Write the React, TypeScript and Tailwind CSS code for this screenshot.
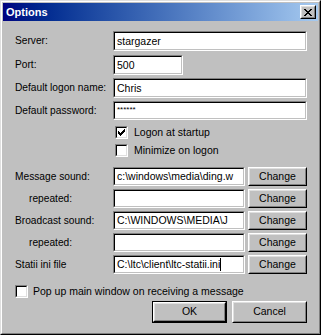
import type { ReactNode } from 'react'

const FONT = { fontFamily: '"Liberation Sans", Arial, sans-serif' }

function Field({ width, value, small, caret }: { width: string; value?: string; small?: boolean; caret?: boolean }) {
  return (
    <div className={`${width} h-full shrink-0 border border-t-[#808080] border-l-[#808080] border-b-white border-r-white`}>
      <div className="h-full border border-t-black border-l-black border-b-[#c0c0c0] border-r-[#c0c0c0] bg-white flex items-center pl-[2px] overflow-hidden whitespace-nowrap">
        <span className={small ? 'text-[8px] leading-none text-black -mt-[2px]' : 'text-[10.5px] leading-none text-black'}>
          {value}
        </span>
        {caret && <span className="inline-block w-px h-[13px] bg-black" />}
      </div>
    </div>
  )
}

function Btn({ children, width, isDefault }: { children: ReactNode; width: string; isDefault?: boolean }) {
  const inner = (
    <div className="h-full border border-t-white border-l-white border-b-black border-r-black">
      <div className="h-full border border-t-[#dfdfdf] border-l-[#dfdfdf] border-b-[#808080] border-r-[#808080] bg-[#c0c0c0] flex items-center justify-center text-[10.5px] text-black">
        {children}
      </div>
    </div>
  )
  return isDefault ? (
    <div className={`${width} h-full shrink-0 border border-black`}>{inner}</div>
  ) : (
    <div className={`${width} h-full shrink-0`}>{inner}</div>
  )
}

function Check({ checked }: { checked?: boolean }) {
  return (
    <div className="w-[13px] h-[13px] shrink-0 border border-t-[#808080] border-l-[#808080] border-b-white border-r-white">
      <div className="w-full h-full border border-t-black border-l-black border-b-[#dfdfdf] border-r-[#dfdfdf] bg-white">
        {checked && (
          <svg width="9" height="9" viewBox="0 0 9 9" className="block">
            <path d="M1 3h1v1h1v1h1V4h1V3h1V2h1V1h1v3H7v1H6v1H5v1H4v1H3V7H2V6H1z" fill="black" />
          </svg>
        )}
      </div>
    </div>
  )
}

function Row({ label, indent, children, className }: { label: string; indent?: boolean; children: ReactNode; className: string }) {
  return (
    <div className={`flex items-center ${className}`}>
      <span className={`w-[98px] shrink-0 text-[10.2px] text-black whitespace-nowrap ${indent ? 'pl-[14px]' : ''}`}>{label}</span>
      {children}
    </div>
  )
}

export default function App() {
  return (
    <div style={FONT} className="w-[321px] h-[335px] border border-t-[#dfdfdf] border-l-[#dfdfdf] border-b-black border-r-black">
      <div className="w-full h-full border border-t-white border-l-white border-b-[#808080] border-r-[#808080] bg-[#c0c0c0] p-px flex flex-col">
        {/* title bar */}
        <div className="h-[18px] shrink-0 flex items-center justify-between pl-[3px] pr-[2px] bg-gradient-to-r from-[#000080] to-[#a6caf0]">
          <span className="text-white text-[11px] font-bold">Options</span>
          <div className="w-[16px] h-[14px] border border-t-white border-l-white border-b-black border-r-black">
            <div className="w-full h-full border border-t-[#dfdfdf] border-l-[#dfdfdf] border-b-[#808080] border-r-[#808080] bg-[#c0c0c0] flex items-center justify-center">
              <svg width="8" height="7" viewBox="0 0 8 7">
                <path d="M0 0h2v1h1v1h2V1h1V0h2v1H7v1H6v1H5v1h1v1h1v1h1v1H6V6H5V5H3v1H2v1H0V6h1V5h1V4h1V3H2V2H1V1H0z" fill="black" />
              </svg>
            </div>
          </div>
        </div>

        {/* body */}
        <div className="flex flex-col pl-[12px]">
          <Row label="Server:" className="h-[20px] mt-[10px]">
            <Field width="w-[194px]" value="stargazer" />
          </Row>
          <Row label="Port:" className="h-[20px] mt-[4px]">
            <Field width="w-[70px]" value="500" />
          </Row>
          <Row label="Default logon name:" className="h-[20px] mt-[3px]">
            <Field width="w-[194px]" value="Chris" />
          </Row>
          <Row label="Default password:" className="h-[19px] mt-[3px]">
            <Field width="w-[194px]" value="******" small />
          </Row>

          <div className="flex items-center gap-[6px] ml-[100px] mt-[6px] h-[13px]">
            <Check checked />
            <span className="text-[10.5px] text-black">Logon at startup</span>
          </div>
          <div className="flex items-center gap-[6px] ml-[100px] mt-[5px] h-[13px]">
            <Check />
            <span className="text-[10.5px] text-black">Minimize on logon</span>
          </div>

          <Row label="Message sound:" className="h-[19px] mt-[10px]">
            <Field width="w-[132px]" value="c:\windows\media\ding.w" />
            <div className="ml-[3px] h-full"><Btn width="w-[59px]">Change</Btn></div>
          </Row>
          <Row label="repeated:" indent className="h-[19px] mt-[3px]">
            <Field width="w-[132px]" />
            <div className="ml-[3px] h-full"><Btn width="w-[59px]">Change</Btn></div>
          </Row>
          <Row label="Broadcast sound:" className="h-[19px] mt-[3px]">
            <Field width="w-[132px]" value="C:\WINDOWS\MEDIA\J" />
            <div className="ml-[3px] h-full"><Btn width="w-[59px]">Change</Btn></div>
          </Row>
          <Row label="repeated:" indent className="h-[19px] mt-[3px]">
            <Field width="w-[132px]" />
            <div className="ml-[3px] h-full"><Btn width="w-[59px]">Change</Btn></div>
          </Row>
          <Row label="Statii ini file" className="h-[19px] mt-[3px]">
            <Field width="w-[132px]" value="C:\ltc\client\ltc-statii.ini" caret />
            <div className="ml-[3px] h-full"><Btn width="w-[59px]">Change</Btn></div>
          </Row>

          <div className="flex items-center gap-[5px] mt-[11px] h-[13px]">
            <Check />
            <span className="text-[10.5px] text-black">Pop up main window on receiving a message</span>
          </div>

          <div className="flex justify-end gap-[5px] h-[22px] mt-[3px] pr-[11px]">
            <Btn width="w-[75px]" isDefault>OK</Btn>
            <Btn width="w-[75px]">Cancel</Btn>
          </div>
        </div>
      </div>
    </div>
  )
}
